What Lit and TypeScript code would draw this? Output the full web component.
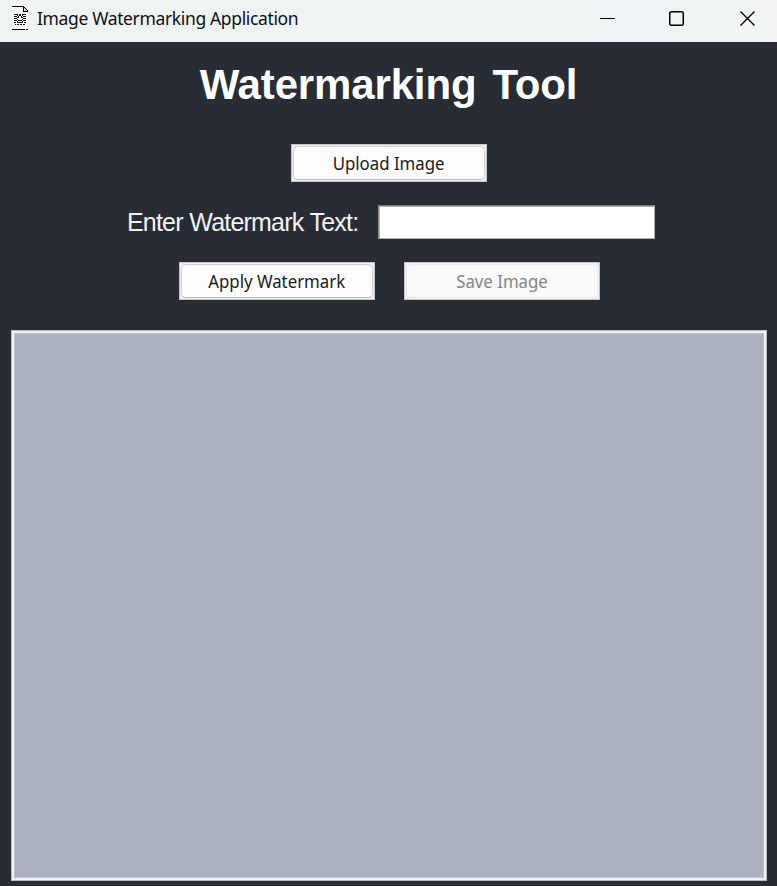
import { LitElement, html, css } from "lit";
import { customElement } from "lit/decorators.js";

@customElement("app-root")
export class AppRoot extends LitElement {
  static styles = css`
    :host {
      display: flex;
      flex-direction: column;
      box-sizing: border-box;
      width: 777px;
      height: 886px;
      background: #282c34;
      overflow: hidden;
    }
    * { box-sizing: border-box; }
    svg { display: block; }
    .titlebar {
      flex: none;
      height: 42px;
      display: flex;
      align-items: flex-start;
      padding: 6px 21px 0 12px;
      background: linear-gradient(90deg, #edf4f2, #f1f3f5);
      color: #111;
    }
    .caption {
      margin-left: 9px;
      font: 17.5px/25px "Noto Sans", sans-serif;
      letter-spacing: -0.36px;
      white-space: nowrap;
      flex: 1;
    }
    .controls { display: flex; gap: 53px; padding-top: 4px; }
    h1 {
      margin: 18px 0 0;
      height: 50px;
      text-align: center;
      color: #fff;
      font: bold 42px/50px "Liberation Sans", Arial, sans-serif;
      letter-spacing: -0.15px;
      word-spacing: 4.5px;
      white-space: nowrap;
    }
    .row { display: flex; flex: none; }
    .upload { margin: 34px 0 0 291px; }
    .entry { margin: 23px 0 0 127px; height: 34px; align-items: center; }
    .actions { margin: 23px 0 0 179px; gap: 29px; }
    label {
      width: 251px;
      color: #f2f3f5;
      font: 25px/34px "Liberation Sans", Arial, sans-serif;
      letter-spacing: -0.8px;
      word-spacing: 0.4px;
      white-space: nowrap;
    }
    input {
      width: 277px;
      height: 34px;
      margin: 0;
      padding: 0 4px;
      background: #fff;
      border: 1px solid;
      border-color: #77797c #a9adae #a9adae #8b8b8d;
      border-radius: 0;
      box-shadow: inset 1px 1px 0 #b5b3b1;
      outline: none;
      font: 20px "Liberation Sans", sans-serif;
    }
    .frame {
      width: 196px;
      height: 38px;
      padding: 1px;
      background: #f0f0f0;
      border: 1px solid #c4c5c6;
    }
    button {
      display: block;
      width: 100%;
      height: 100%;
      padding: 0 0 1px;
      border: 1px solid #d0d0d0;
      border-bottom-color: #b9b9b9;
      border-radius: 5px;
      background: #fdfdfd;
      color: #1a1a1a;
      font: 17.6px/30px "Noto Sans", sans-serif;
      white-space: nowrap;
    }
    button span { display: inline-block; transform: scaleX(0.955); }
    button:disabled {
      background: #f9f9f9;
      border-color: #efefef;
      color: #858585;
    }
    .canvas {
      flex: none;
      width: 756px;
      height: 551px;
      margin: 30px 0 0 11px;
      border: 1px solid #b9bbbe;
      background: #abb1bf;
      box-shadow: inset 0 0 0 2px #f0f0f0, inset 0 0 0 3px #c0c3cb;
    }
  `;

  private button(label: string, disabled = false) {
    return html`<div class="frame"><button ?disabled=${disabled}><span>${label}</span></button></div>`;
  }

  render() {
    return html`
      <header class="titlebar">
        <svg width="16" height="24" viewBox="0 0 16 24" shape-rendering="crispEdges">
          <path d="M0 0h12l4 5v19H0z" fill="#fafafa"/>
          <path d="M12 1l3 4h-3z" fill="#d9d9ea"/>
          <path d="M0 0h12v1H0zM11 1h1v5h-1zM12 5h4v1h-4zM12 1h1v1h-1zM13 2h1v1h-1zM14 3h1v1h-1zM15 4h1v1h-1zM0 23h13v1H0zM14 23h2v1h-2z" fill="#000"/>
          <path d="M2 8h4v1H2zM7 8h2v1H7zM10 8h4v1h-4zM2 10h3v1H2zM5 9h1v1H5zM7 9h2v1H7zM10 9h1v1h-1zM11 10h3v1h-3zM6 10h1v1H6zM9 10h1v1H9zM2 12h3v1H2zM5 11h2v1H5zM9 11h2v1H9zM11 12h3v1h-3zM2 14h3v1H2zM5 13h1v1H5zM6 14h4v1H6zM10 13h1v1h-1zM11 14h3v1h-3zM2 16h2v1H2zM5 15h1v1H5zM10 15h1v1h-1zM5 16h6v1H5zM12 16h2v1h-2zM3 18h1v1H3zM5 18h2v1H5zM8 18h2v1H8zM11 18h2v1h-2z" fill="#111"/>
        </svg>
        <div class="caption">Image Watermarking Application</div>
        <div class="controls">
          <svg width="16" height="18" viewBox="0 0 16 18"><path d="M0 8.5h15" stroke="#000"/></svg>
          <svg width="17" height="18" viewBox="0 0 17 18"><rect x="0.75" y="1.75" width="13.5" height="13.5" rx="1.5" fill="none" stroke="#000" stroke-width="1.5"/></svg>
          <svg width="17" height="18" viewBox="0 0 17 18"><path d="M1.5 1.5l14 14M15.5 1.5l-14 14" stroke="#000" stroke-width="1.4"/></svg>
        </div>
      </header>
      <h1>Watermarking Tool</h1>
      <div class="row upload">${this.button("Upload Image")}</div>
      <div class="row entry">
        <label for="mark">Enter Watermark Text:</label>
        <input id="mark" type="text" />
      </div>
      <div class="row actions">
        ${this.button("Apply Watermark")}
        ${this.button("Save Image", true)}
      </div>
      <div class="canvas"></div>
    `;
  }
}
